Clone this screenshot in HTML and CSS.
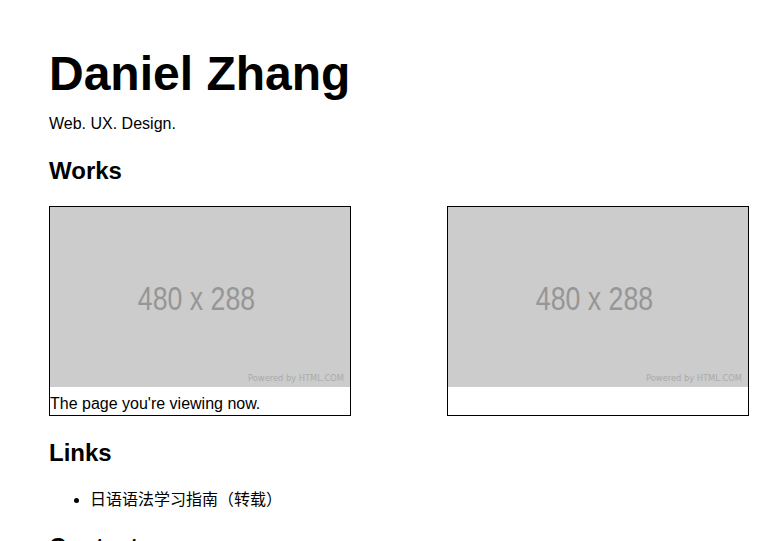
FILE: index.html
```html
<!DOCTYPE html>
<html lang="zh-CN">
<head>
  <meta charset="UTF-8">
  <title>Daniel Zhang</title>
  <link rel="stylesheet" href="styles.css">
</head>
<body>

  <div class="page">
    <h1>Daniel Zhang</h1>
    <p class="tagline">Web. UX. Design.</p>

    <h2 class="works-title">Works</h2>
    <div class="works">
      <div class="work">
        <div class="thumb">
          <span class="size">480 x 288</span>
          <span class="powered">Powered by HTML.COM</span>
        </div>
        <div class="caption">The page you're viewing now.</div>
      </div>
      <div class="work">
        <div class="thumb">
          <span class="size">480 x 288</span>
          <span class="powered">Powered by HTML.COM</span>
        </div>
        <div class="caption"></div>
      </div>
    </div>

    <h2 class="links-title">Links</h2>
    <ul class="links">
      <li>日语语法学习指南（转载）</li>
    </ul>

    <h2>Contact</h2>
  </div>

</body>
</html>
```

FILE: styles.css
```css
body {
  margin: 0;
  color: #000;
  background: #fff;
  font-family: "Liberation Sans", Arial, "Noto Sans CJK SC", sans-serif;
  font-size: 16px;
}
.page {
  width: 700px;
  padding: 14px 0 0 49px;
}
h1 {
  font-size: 48px;
  margin: 32px 0 0;
  line-height: 56px;
}
.tagline {
  margin: 13px 0 0;
}
h2 {
  font-size: 24px;
  line-height: 28px;
  margin: 24px 0 20px;
}
.works-title {
  margin-bottom: 21px;
}
.links-title {
  margin-top: 23px;
}
.works {
  display: flex;
  justify-content: space-between;
}
.work {
  width: 300px;
  border: 1px solid #000;
}
.thumb {
  position: relative;
  height: 180px;
  background: #ccc;
  display: flex;
  align-items: center;
  justify-content: center;
}
.size {
  color: #969696;
  font-size: 33px;
  margin: 4px 8px 0 0;
  transform: scaleX(0.81);
}
.powered {
  position: absolute;
  right: 6px;
  bottom: 4px;
  font-family: "DejaVu Sans", sans-serif;
  font-size: 8.3px;
  color: #aaa;
}
.caption {
  height: 28px;
  line-height: 34px;
}
.links {
  margin: 0;
  padding: 4px 0 0 41px;
}
.links li {
  line-height: 18px;
}
```
